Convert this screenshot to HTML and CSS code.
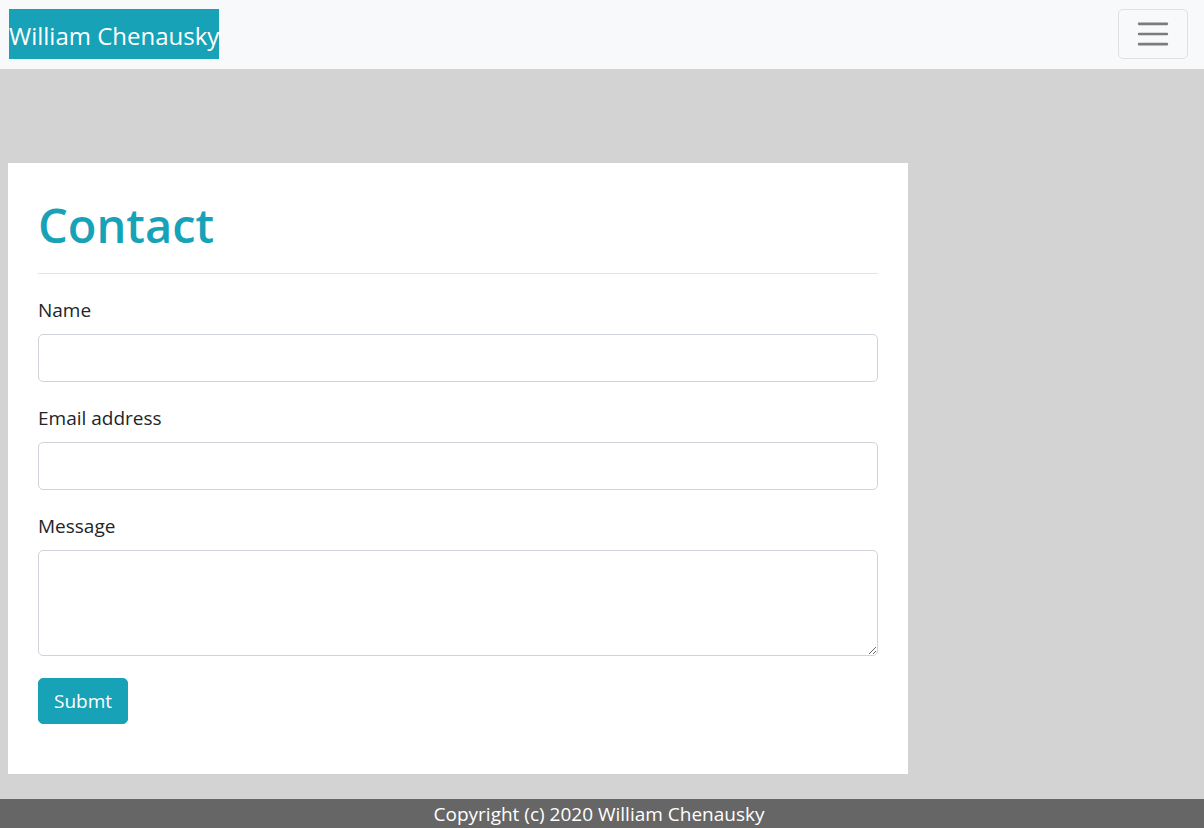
FILE: index.html
```html
<!DOCTYPE html>
<html lang="en">
<head>
<meta charset="utf-8">
<meta name="viewport" content="width=device-width, initial-scale=1">
<title>Contact</title>
<link rel="stylesheet" href="styles.css">
</head>
<body>
<nav class="navbar">
  <a class="brand" href="#">William Chenausky</a>
  <button class="toggler" type="button" aria-label="Toggle navigation">
    <svg class="toggler-icon" viewBox="0 0 30 30" aria-hidden="true"><path d="M4 7h22M4 15h22M4 23h22"/></svg>
  </button>
</nav>
<main class="content">
  <section class="card">
    <h1 class="title">Contact</h1>
    <form class="form">
      <div class="group">
        <label class="label" for="name">Name</label>
        <input class="control" id="name" type="text">
      </div>
      <div class="group">
        <label class="label" for="email">Email address</label>
        <input class="control" id="email" type="email">
      </div>
      <div class="group">
        <label class="label" for="message">Message</label>
        <textarea class="control message" id="message" rows="3"></textarea>
      </div>
      <button class="submit" type="submit">Submt</button>
    </form>
  </section>
</main>
<footer class="footer">Copyright (c) 2020 William Chenausky</footer>
</body>
</html>
```
FILE: styles.css
```css
* { box-sizing: border-box; }
body {
  margin: 0;
  min-height: 100vh;
  display: flex;
  flex-direction: column;
  background: #d3d3d3;
  color: #212529;
  font-family: "Segoe UI", "Open Sans", "Noto Sans", sans-serif;
  font-size: 19px;
  line-height: 28px;
}
.navbar {
  display: flex;
  align-items: center;
  justify-content: space-between;
  padding: 9px 16px 10px 9px;
  background: #f8f9fa;
}
.brand {
  padding: 9px 0 5px;
  background: #17a2b8;
  color: #fff;
  font-size: 24px;
  line-height: 36px;
  text-decoration: none;
  white-space: nowrap;
}
.toggler {
  display: flex;
  padding: 5px 15px;
  border: 1px solid #dee0e3;
  border-radius: 5px;
  background: transparent;
}
.toggler-icon {
  width: 38px;
  height: 38px;
  fill: none;
  stroke: #7c7c7d;
  stroke-width: 2;
  stroke-linecap: round;
}
.content {
  flex: 1;
  padding: 94px 8px 25px;
}
.card {
  max-width: 900px;
  padding: 30px 30px 50px;
  background: #fff;
}
.title {
  margin: 0 0 22px;
  padding-bottom: 16px;
  border-bottom: 1px solid #e5e5e5;
  color: #17a2b8;
  font-size: 47px;
  font-weight: 600;
  line-height: 64px;
}
.form {
  display: flex;
  flex-direction: column;
  align-items: stretch;
  gap: 22px;
}
.label {
  display: block;
  margin-bottom: 10px;
}
.control {
  display: block;
  width: 100%;
  height: 48px;
  padding: 8px 14px;
  border: 1px solid #ced4da;
  border-radius: 5px;
  background: #fff;
  color: #495057;
  font: inherit;
}
.message {
  height: 106px;
  resize: vertical;
}
.submit {
  align-self: flex-start;
  padding: 9px 15px;
  border: 1px solid #17a2b8;
  border-radius: 5px;
  background: #17a2b8;
  color: #fff;
  font: inherit;
  line-height: 26px;
}
.footer {
  padding: 2px 6px 0 0;
  background: #666;
  color: #fff;
  line-height: 27px;
  text-align: center;
}
```
